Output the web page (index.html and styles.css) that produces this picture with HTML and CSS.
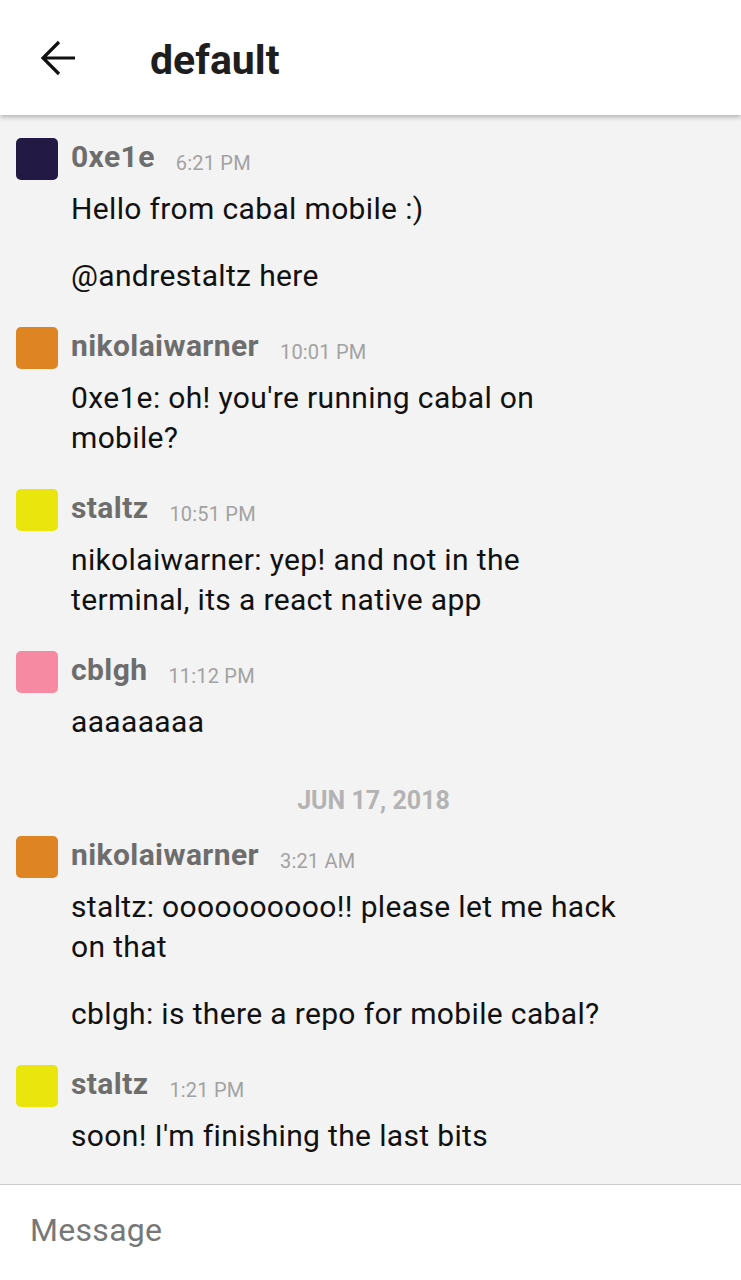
FILE: index.html
```html
<!DOCTYPE html>
<html>
<head>
<meta charset="utf-8">
<link rel="stylesheet" href="styles.css">
</head>
<body>
<div class="app">
  <header class="topbar">
    <button class="back" aria-label="Back">
      <svg width="40" height="40" viewBox="0 0 40 40"><path d="M37 20H5M21 4L5 20l16 16" fill="none" stroke="#111" stroke-width="3.2" stroke-linecap="butt" stroke-linejoin="miter"/></svg>
    </button>
    <h1 class="title">default</h1>
  </header>
  <main class="messages">
    <div class="msg">
      <div class="avatar purple"></div>
      <div class="body">
        <div class="head"><span class="name">0xe1e</span><span class="time">6:21 PM</span></div>
        <p>Hello from cabal mobile :)</p>
        <p>@andrestaltz here</p>
      </div>
    </div>
    <div class="msg">
      <div class="avatar orange"></div>
      <div class="body">
        <div class="head"><span class="name">nikolaiwarner</span><span class="time">10:01 PM</span></div>
        <p>0xe1e: oh! you're running cabal on mobile?</p>
      </div>
    </div>
    <div class="msg">
      <div class="avatar yellow"></div>
      <div class="body">
        <div class="head"><span class="name">staltz</span><span class="time">10:51 PM</span></div>
        <p>nikolaiwarner: yep! and not in the terminal, its a react native app</p>
      </div>
    </div>
    <div class="msg">
      <div class="avatar pink"></div>
      <div class="body">
        <div class="head"><span class="name">cblgh</span><span class="time">11:12 PM</span></div>
        <p>aaaaaaaa</p>
      </div>
    </div>
    <div class="date">JUN 17, 2018</div>
    <div class="msg">
      <div class="avatar orange"></div>
      <div class="body">
        <div class="head"><span class="name">nikolaiwarner</span><span class="time">3:21 AM</span></div>
        <p>staltz: oooooooooo!! please let me hack on that</p>
        <p>cblgh: is there a repo for mobile cabal?</p>
      </div>
    </div>
    <div class="msg">
      <div class="avatar yellow"></div>
      <div class="body">
        <div class="head"><span class="name">staltz</span><span class="time">1:21 PM</span></div>
        <p>soon! I'm finishing the last bits</p>
      </div>
    </div>
  </main>
  <footer class="composer">
    <input class="input" type="text" placeholder="Message">
  </footer>
</div>
</body>
</html>
```

FILE: styles.css
```css
* { box-sizing: border-box; }
html, body {
  margin: 0;
  padding: 0;
  background: #f3f3f3;
  font-family: Roboto, "Noto Sans", sans-serif;
}
.app {
  height: 1280px;
  display: flex;
  flex-direction: column;
  overflow: hidden;
}
.topbar {
  height: 115px;
  flex: 0 0 115px;
  background: #fff;
  display: flex;
  align-items: center;
  box-shadow: 0 2px 5px rgba(0,0,0,0.28);
  position: relative;
  z-index: 2;
}
.back {
  border: 0;
  background: none;
  padding: 0;
  margin: 0 0 0 38px;
  width: 40px;
  height: 40px;
  display: flex;
}
.title {
  margin: 6px 0 0 72px;
  font-size: 41px;
  font-weight: 700;
  color: #1e1e1e;
  line-height: 1;
}
.messages {
  flex: 1;
  padding-top: 22px;
  overflow: hidden;
}
.msg {
  display: flex;
  gap: 13px;
  padding: 0 115px 0 16px;
  margin-bottom: 30px;
}
.avatar {
  flex: 0 0 42px;
  width: 42px;
  height: 42px;
  border-radius: 5px;
  margin-top: 1px;
}
.purple { background: #221a44; }
.orange { background: #de8422; }
.yellow { background: #eae50d; }
.pink { background: #f68aa2; }
.body { flex: 1; min-width: 0; }
.head {
  display: flex;
  align-items: flex-end;
  gap: 21px;
  height: 40px;
  margin-bottom: 12px;
}
.name {
  font-size: 30px;
  font-weight: 700;
  letter-spacing: 0.4px;
  color: #6d6d6d;
  line-height: 40px;
}
.time {
  font-size: 20px;
  letter-spacing: 0.2px;
  color: #a2a2a2;
  line-height: 28px;
}
.body p {
  margin: 0 0 27px;
  font-size: 30px;
  letter-spacing: 0.35px;
  line-height: 40px;
  color: #111;
}
.body p:last-child { margin-bottom: 0; }
.date {
  text-align: center;
  font-size: 25px;
  font-weight: 700;
  color: #b3b3b3;
  line-height: 40px;
  margin: 39px 0 14px;
  padding-left: 6px;
}
.composer {
  flex: 0 0 96px;
  background: #fff;
  border-top: 1px solid #cbcbcb;
  display: flex;
  align-items: center;
}
.input {
  border: 0;
  outline: none;
  background: transparent;
  font-family: Roboto, "Noto Sans", sans-serif;
  font-size: 32px;
  letter-spacing: 0.3px;
  color: #111;
  margin: -6px 0 0 30px;
  padding: 0;
  width: 600px;
}
.input::placeholder { color: #777; }
```
